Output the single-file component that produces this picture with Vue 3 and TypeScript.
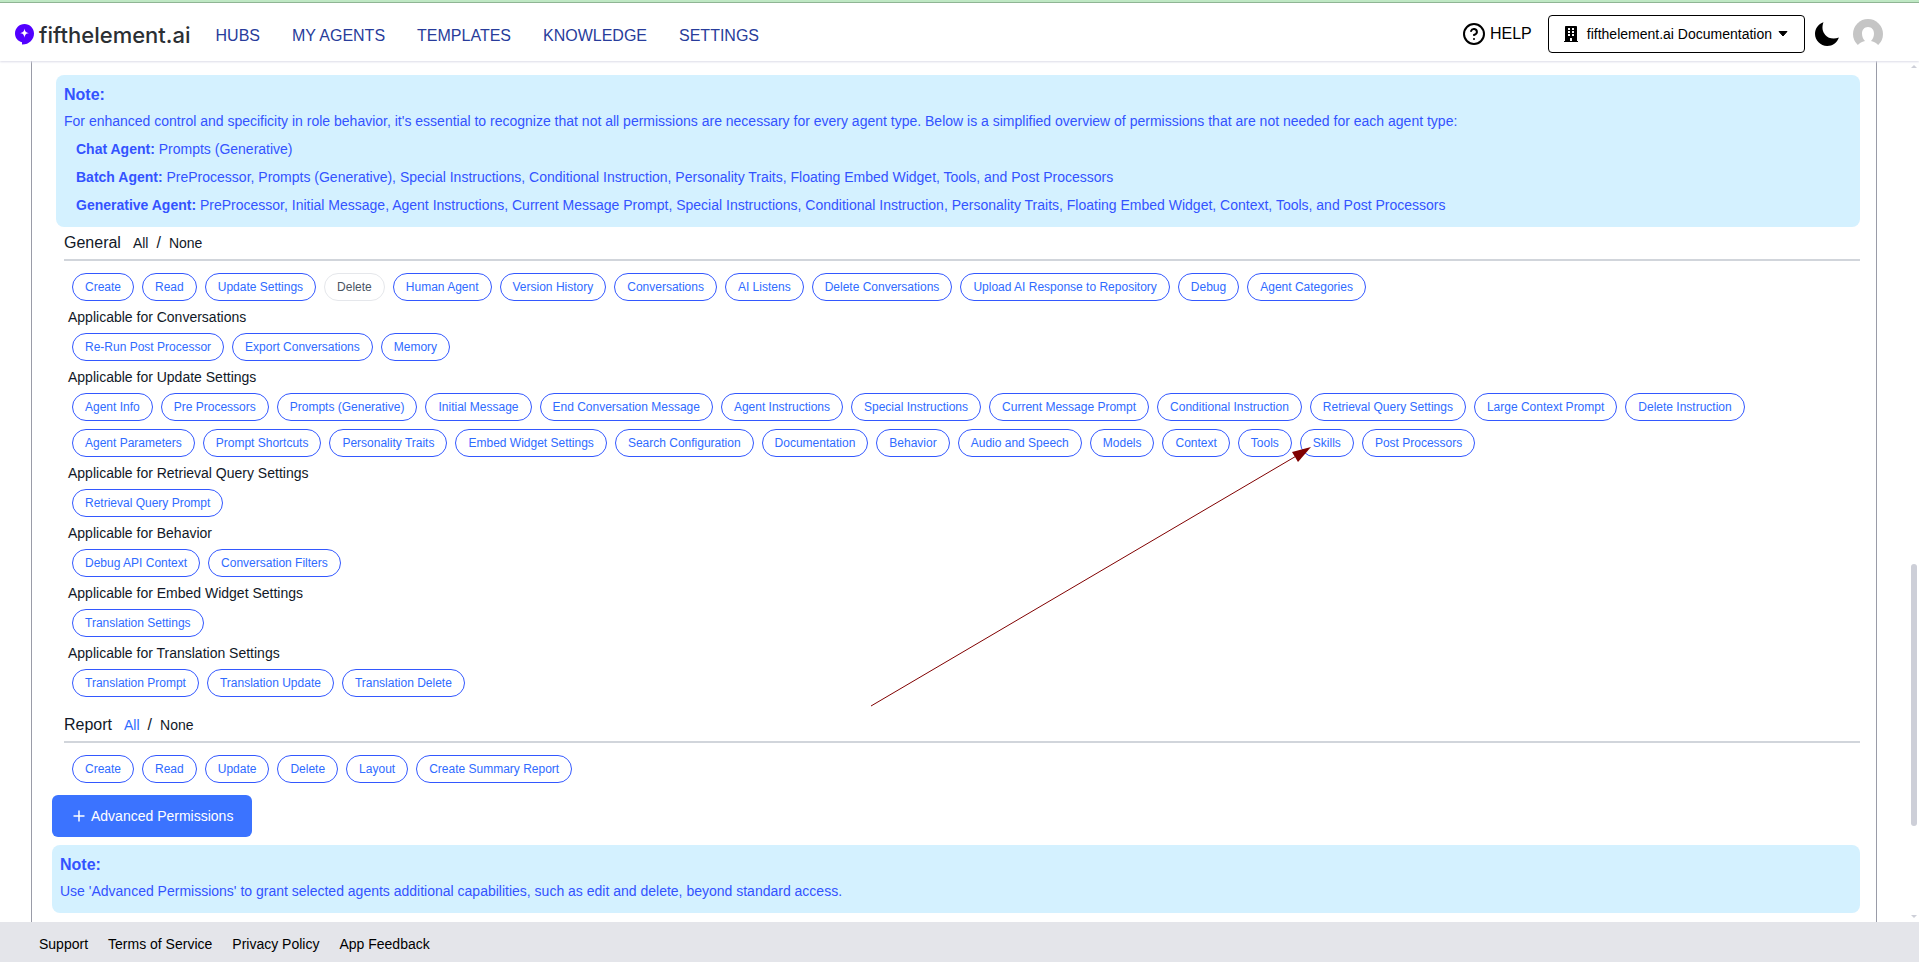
<script setup lang="ts">
import { ref } from 'vue'

interface Chip {
  label: string
  on: boolean
}
interface Group {
  title: string
  chips: Chip[]
}
interface Section {
  name: string
  groups: Group[]
}

const group = (title: string, labels: string[], off: string[] = []): Group => ({
  title,
  chips: labels.map((label) => ({ label, on: !off.includes(label) })),
})

const navLinks = ['HUBS', 'MY AGENTS', 'TEMPLATES', 'KNOWLEDGE', 'SETTINGS']
const footerLinks = ['Support', 'Terms of Service', 'Privacy Policy', 'App Feedback']

const agentNotes = [
  { type: 'Chat Agent:', items: 'Prompts (Generative)' },
  {
    type: 'Batch Agent:',
    items:
      'PreProcessor, Prompts (Generative), Special Instructions, Conditional Instruction, Personality Traits, Floating Embed Widget, Tools, and Post Processors',
  },
  {
    type: 'Generative Agent:',
    items:
      'PreProcessor, Initial Message, Agent Instructions, Current Message Prompt, Special Instructions, Conditional Instruction, Personality Traits, Floating Embed Widget, Context, Tools, and Post Processors',
  },
]

const sections = ref<Section[]>([
  {
    name: 'General',
    groups: [
      group(
        '',
        [
          'Create', 'Read', 'Update Settings', 'Delete', 'Human Agent', 'Version History',
          'Conversations', 'AI Listens', 'Delete Conversations',
          'Upload AI Response to Repository', 'Debug', 'Agent Categories',
        ],
        ['Delete'],
      ),
      group('Applicable for Conversations', ['Re-Run Post Processor', 'Export Conversations', 'Memory']),
      group('Applicable for Update Settings', [
        'Agent Info', 'Pre Processors', 'Prompts (Generative)', 'Initial Message',
        'End Conversation Message', 'Agent Instructions', 'Special Instructions',
        'Current Message Prompt', 'Conditional Instruction', 'Retrieval Query Settings',
        'Large Context Prompt', 'Delete Instruction', 'Agent Parameters', 'Prompt Shortcuts',
        'Personality Traits', 'Embed Widget Settings', 'Search Configuration', 'Documentation',
        'Behavior', 'Audio and Speech', 'Models', 'Context', 'Tools', 'Skills', 'Post Processors',
      ]),
      group('Applicable for Retrieval Query Settings', ['Retrieval Query Prompt']),
      group('Applicable for Behavior', ['Debug API Context', 'Conversation Filters']),
      group('Applicable for Embed Widget Settings', ['Translation Settings']),
      group('Applicable for Translation Settings', [
        'Translation Prompt', 'Translation Update', 'Translation Delete',
      ]),
    ],
  },
  {
    name: 'Report',
    groups: [group('', ['Create', 'Read', 'Update', 'Delete', 'Layout', 'Create Summary Report'])],
  },
])

const allOn = (s: Section) => s.groups.every((g) => g.chips.every((c) => c.on))
const setAll = (s: Section, on: boolean) => {
  s.groups.forEach((g) => g.chips.forEach((c) => (c.on = on)))
}
</script>

<template>
  <div class="page">
    <header class="topbar">
      <a class="brand" href="#" aria-label="fifthelement.ai home">
        <svg width="20" height="21" viewBox="0 0 20 21" aria-hidden="true">
          <path fill="#5200ff" d="M9.500 0C4.200 0 0 4.200 0 9.500c0 4.300 2.800 7.700 7 8.700V20.500C14 20.700 19 15.600 19 9.500 19 4.200 14.800 0 9.500 0z" />
          <path fill="#fff" d="M9.500 4.500c.5 3.100 1.500 4.100 4.600 4.600-3.100.5-4.100 1.500-4.600 4.600-.5-3.100-1.500-4.100-4.600-4.600 3.100-.5 4.100-1.500 4.600-4.600z" />
        </svg>
        <span>fifthelement.ai</span>
      </a>
      <nav class="nav" aria-label="Main">
        <a v-for="link in navLinks" :key="link" href="#">{{ link }}</a>
      </nav>
      <div class="tools">
        <a class="help" href="#">
          <svg width="24" height="24" viewBox="0 0 24 24" fill="none" stroke="#000" stroke-width="2" stroke-linecap="round" stroke-linejoin="round" aria-hidden="true">
            <circle cx="12" cy="12" r="10" />
            <path d="M9.090 9a3 3 0 0 1 5.830 1c0 2-3 3-3 3M12 17h.01" />
          </svg>
          <span>HELP</span>
        </a>
        <button class="org" type="button" aria-haspopup="true">
          <svg width="14" height="16" viewBox="0 0 448 512" aria-hidden="true">
            <path fill="#000" d="M436 480h-20V24c0-13.300-10.700-24-24-24H56C42.700 0 32 10.700 32 24v456H12c-6.600 0-12 5.400-12 12v20h448v-20c0-6.600-5.400-12-12-12zM128 76c0-6.600 5.400-12 12-12h40c6.600 0 12 5.400 12 12v40c0 6.600-5.400 12-12 12h-40c-6.600 0-12-5.400-12-12V76zm0 96c0-6.600 5.400-12 12-12h40c6.600 0 12 5.400 12 12v40c0 6.600-5.400 12-12 12h-40c-6.600 0-12-5.400-12-12v-40zm52 148h-40c-6.600 0-12-5.400-12-12v-40c0-6.600 5.400-12 12-12h40c6.600 0 12 5.400 12 12v40c0 6.600-5.400 12-12 12zm76 160h-64v-84c0-6.600 5.400-12 12-12h40c6.600 0 12 5.400 12 12v84zm64-172c0 6.600-5.400 12-12 12h-40c-6.600 0-12-5.400-12-12v-40c0-6.600 5.400-12 12-12h40c6.600 0 12 5.400 12 12v40zm0-96c0 6.600-5.400 12-12 12h-40c-6.600 0-12-5.400-12-12v-40c0-6.600 5.400-12 12-12h40c6.600 0 12 5.400 12 12v40zm0-96c0 6.600-5.400 12-12 12h-40c-6.600 0-12-5.400-12-12V76c0-6.600 5.400-12 12-12h40c6.600 0 12 5.400 12 12v40z" />
          </svg>
          <span>fifthelement.ai Documentation</span>
          <svg class="caret" width="10" height="6" viewBox="0 0 10 6" aria-hidden="true">
            <path d="M1 .5h8L5 5z" fill="#000" stroke="#000" stroke-linejoin="round" />
          </svg>
        </button>
        <button class="icon-button" type="button" aria-label="Dark mode">
          <svg width="24" height="24" viewBox="0 0 24 24" aria-hidden="true">
            <path fill="#000" d="M8.500.2C3.400 2 0 6.600 0 11.800 0 18.500 5.500 24 12.200 24c5.300 0 10-3.400 11.700-8.500-5.500 2-10.700.8-13.600-2.600C7.400 9.500 6.600 5 8.500.2z" />
          </svg>
        </button>
        <button class="icon-button avatar" type="button" aria-label="Account">
          <svg width="30" height="30" viewBox="0 0 30 30" aria-hidden="true">
            <circle cx="15" cy="15" r="15" fill="#c5c5c5" />
            <path fill="#fff" d="M15 8c3.700 0 6 2.900 6 6.500 0 3-1.200 5.800-3 7.500 3.400.6 6 2.300 7.500 4.500C22.700 29 19 30.500 15 30.500S7.300 29 4.500 26.500C6 24.300 8.600 22.600 12 22c-1.800-1.700-3-4.500-3-7.500C9 10.900 11.300 8 15 8z" />
          </svg>
        </button>
      </div>
    </header>

    <main class="content">
      <div class="card">
        <section class="note">
          <h2>Note:</h2>
          <p>
            For enhanced control and specificity in role behavior, it's essential to recognize that not all permissions are necessary for every agent type. Below is a simplified overview of permissions that are not needed for each agent type:
          </p>
          <ul>
            <li v-for="n in agentNotes" :key="n.type"><b>{{ n.type }}</b> {{ n.items }}</li>
          </ul>
        </section>

        <section v-for="s in sections" :key="s.name" class="permissions">
          <div class="section-head">
            <h3>{{ s.name }}</h3>
            <div class="bulk">
              <button type="button" :class="{ active: allOn(s) }" @click="setAll(s, true)">All</button>
              <span>/</span>
              <button type="button" @click="setAll(s, false)">None</button>
            </div>
          </div>
          <template v-for="g in s.groups" :key="g.title">
            <h4 v-if="g.title">{{ g.title }}</h4>
            <div class="chips">
              <button
                v-for="c in g.chips"
                :key="c.label"
                type="button"
                class="chip"
                :class="{ on: c.on }"
                :aria-pressed="c.on"
                @click="c.on = !c.on"
              >
                {{ c.label }}
              </button>
            </div>
          </template>
        </section>

        <button class="advanced" type="button">
          <svg width="12" height="12" viewBox="0 0 12 12" stroke="#fff" stroke-width="1.500" aria-hidden="true">
            <path d="M6 .5v11M.5 6h11" />
          </svg>
          Advanced Permissions
        </button>

        <section class="note short">
          <h2>Note:</h2>
          <p>Use 'Advanced Permissions' to grant selected agents additional capabilities, such as edit and delete, beyond standard access.</p>
        </section>
      </div>

      <svg class="pointer" width="442" height="262" viewBox="0 0 442 262" aria-hidden="true">
        <path d="M1 260 428 9" stroke="#800000" fill="none" />
        <path d="M441 1 422 6l6 10z" fill="#800000" />
      </svg>

      <div class="scrollbar" aria-hidden="true">
        <svg width="6" height="3" viewBox="0 0 6 3"><path d="M0 3 3 0l3 3z" fill="#cdcfd8" /></svg>
        <div class="track"><div class="thumb"></div></div>
        <svg width="6" height="3" viewBox="0 0 6 3"><path d="M0 0 3 3l3-3z" fill="#cdcfd8" /></svg>
      </div>
    </main>

    <footer class="footer">
      <a v-for="link in footerLinks" :key="link" href="#">{{ link }}</a>
    </footer>
  </div>
</template>

<style>
body {
  margin: 0;
}
</style>

<style scoped>
.page {
  display: flex;
  flex-direction: column;
  height: 100vh;
  overflow: hidden;
  background: #fff;
  color: #111827;
  font-family: 'Liberation Sans', Arial, sans-serif;
  font-size: 14px;
  line-height: 20px;
}
.page *,
.page {
  box-sizing: border-box;
}
a {
  color: inherit;
  text-decoration: none;
}
button {
  margin: 0;
  padding: 0;
  border: 0;
  background: none;
  color: inherit;
  font: inherit;
  cursor: pointer;
}
svg {
  display: block;
  flex: none;
}
h2,
h3,
h4,
p,
ul {
  margin: 0;
  padding: 0;
  font-weight: 400;
}

.topbar {
  position: relative;
  z-index: 1;
  display: flex;
  align-items: center;
  flex: none;
  height: 61px;
  padding: 5px 36px 0 15px;
  border-top: 2px solid #bfe8c4;
  background: #fff;
  box-shadow: inset 0 1px #8fb594, 0 1px 2px #dcdce8;
}
.brand {
  display: flex;
  align-items: center;
  gap: 4px;
  color: #2b2f33;
  font-family: Inter, sans-serif;
  font-size: 22px;
  font-weight: 500;
  line-height: 24px;
}
.brand span {
  padding-top: 2px;
}
.nav {
  display: flex;
  gap: 32px;
  margin-left: 25px;
  padding-top: 3px;
  color: #283c9b;
  font-size: 16px;
  line-height: 24px;
}
.tools {
  display: flex;
  align-items: center;
  margin-left: auto;
  color: #000;
}
.help {
  display: flex;
  align-items: center;
  gap: 4px;
  font-size: 16px;
}
.org {
  display: flex;
  align-items: center;
  height: 38px;
  margin-left: 16px;
  padding: 0 16px 0 15px;
  border: 1px solid #000;
  border-radius: 4px;
}
.org span {
  margin: 0 6px 0 9px;
}
.icon-button {
  margin-left: 10px;
}
.avatar {
  margin-left: 14px;
}

.content {
  position: relative;
  display: flex;
  flex: 1;
  min-height: 0;
  overflow: hidden;
}
.card {
  flex: 1;
  margin: 0 42px 0 31px;
  padding: 14px 16px 0 20px;
  border: 1px solid #9a9ca8;
  border-width: 0 1px;
}
.note {
  margin-left: 4px;
  padding: 8px;
  border-radius: 8px;
  background: #d4f1ff;
  color: #3353ff;
}
.note h2 {
  font-size: 16px;
  font-weight: 700;
  line-height: 24px;
}
.note p {
  margin-top: 4px;
  line-height: 20px;
}
.note ul {
  margin: 4px 12px 0;
  list-style: none;
  line-height: 28px;
}
.note.short {
  margin: 8px 0 0;
  padding-bottom: 12px;
}
.permissions {
  margin-left: 12px;
}
.section-head {
  display: flex;
  align-items: center;
  height: 34px;
  margin-bottom: 12px;
  border-bottom: 2px solid #d1d5db;
}
.permissions + .permissions .section-head {
  height: 46px;
  padding-top: 12px;
}
h3,
.bulk {
  font-size: 16px;
}
.bulk {
  display: flex;
  align-items: center;
  gap: 8px;
  margin-left: 12px;
}
.bulk button {
  font-size: 14px;
}
.bulk .active {
  color: #2f6bff;
}
h4 {
  margin: 6px 4px;
  font-size: 14px;
  line-height: 20px;
}
.chips {
  display: flex;
  flex-wrap: wrap;
  gap: 8px;
  padding: 0 8px;
}
.chip {
  height: 28px;
  padding: 0 12px;
  border: 1px solid #e5e7eb;
  border-radius: 14px;
  color: #4b5563;
  font-size: 12px;
  line-height: 16px;
}
.chip.on {
  border-color: #3358ff;
  color: #2f6bff;
}
.advanced {
  display: flex;
  align-items: center;
  justify-content: center;
  gap: 6px;
  height: 42px;
  margin-top: 12px;
  padding: 0 19px 0 21px;
  border-radius: 6px;
  background: #3b73ff;
  color: #fff;
}
.pointer {
  position: absolute;
  top: 385px;
  left: 870px;
  pointer-events: none;
}
.scrollbar {
  position: absolute;
  top: 4px;
  right: 2px;
  bottom: 4px;
  display: flex;
  flex-direction: column;
  justify-content: space-between;
  gap: 4px;
}
.track {
  flex: 1;
  display: flex;
  flex-direction: column;
}
.track::before {
  content: '';
  flex: 494;
}
.track::after {
  content: '';
  flex: 85;
}
.thumb {
  flex: 264;
  width: 6px;
  border-radius: 3px;
  background: #cdcfd8;
}
.footer {
  display: flex;
  align-items: center;
  flex: none;
  gap: 20px;
  height: 40px;
  padding: 4px 39px 0;
  background: #e4e5ea;
  color: #000;
}
</style>
